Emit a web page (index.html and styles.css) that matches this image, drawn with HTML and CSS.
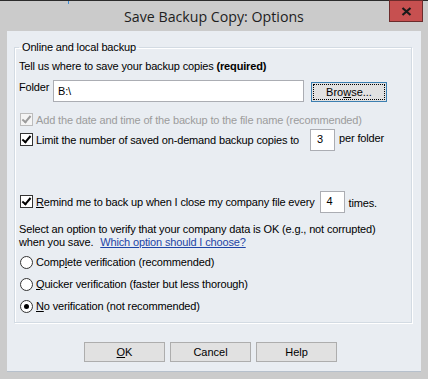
FILE: index.html
```html
<!DOCTYPE html>
<html>
  <head>
    <title>Save Backup Copy: Options</title>
    <link rel="stylesheet" href="styles.css">
  </head>
  <body>
    <div class="window">
      <div class="titlebar">
        <span class="titlebar__tick"></span>
        <h1 class="titlebar__title">Save Backup Copy: Options</h1>
        <button class="titlebar__close" type="button" aria-label="Close">
          <svg width="11" height="9" viewBox="0 0 11 9"><path d="M1.5 1 L9.5 8 M9.5 1 L1.5 8" stroke="#1a1a1a" stroke-width="2.2" fill="none"/></svg>
        </button>
      </div>

      <div class="panel">
        <fieldset class="group">
          <legend class="group__legend">Online and local backup</legend>

          <p class="intro">Tell us where to save your backup copies <b>(required)</b></p>

          <div class="folder-row">
            <span class="folder-row__label">Folder</span>
            <div class="field field--path">B:\</div>
            <button class="btn btn--browse" type="button"><span class="btn__focus">Bro<u>w</u>se...</span></button>
          </div>

          <div class="check check--disabled">
            <span class="check__box check__box--on"></span>
            <span>Add the date and time of the backup to the file name (recommended)</span>
          </div>

          <div class="check check--limit">
            <span class="check__box check__box--on"></span>
            <span class="check__text">Limit the number of saved on-demand backup copies to</span>
            <div class="field field--num">3</div>
            <span class="check__after">per folder</span>
          </div>

          <div class="check check--remind">
            <span class="check__box check__box--on"></span>
            <span class="check__text"><u>R</u>emind me to back up when I close my company file every</span>
            <div class="field field--num">4</div>
            <span class="check__after">times.</span>
          </div>

          <p class="verify">Select an option to verify that your company data is OK (e.g., not corrupted)<br>when you save. <a class="verify__link" href="#">Which option should I choose?</a></p>

          <div class="radio">
            <span class="radio__dot"></span>
            <span>Comp<u>l</u>ete verification (recommended)</span>
          </div>
          <div class="radio">
            <span class="radio__dot"></span>
            <span><u>Q</u>uicker verification (faster but less thorough)</span>
          </div>
          <div class="radio">
            <span class="radio__dot radio__dot--on"></span>
            <span><u>N</u>o verification (not recommended)</span>
          </div>
        </fieldset>

        <div class="actions">
          <button class="btn btn--action" type="button"><u>O</u>K</button>
          <button class="btn btn--action" type="button">Cancel</button>
          <button class="btn btn--action" type="button">Help</button>
        </div>
      </div>
    </div>
  </body>
</html>
```

FILE: styles.css
```css
body {
  margin: 0;
  background: #cbcbcb;
  font-family: "Liberation Sans", Arial, sans-serif;
  font-size: 11px;
  letter-spacing: -0.15px;
  color: #000;
  white-space: nowrap;
}

.window {
  width: 428px;
  height: 379px;
  border-top: 1px solid #2b2b2b;
  box-sizing: border-box;
}

/* title bar */
.titlebar {
  position: relative;
  height: 30px;
  display: flex;
  align-items: center;
  justify-content: center;
}
.titlebar__tick {
  position: absolute;
  left: 68px;
  top: 0;
  width: 1px;
  height: 3px;
  background: #3d8ed8;
}
.titlebar__title {
  margin: 0;
  padding-top: 1px;
  font-family: "Open Sans", sans-serif;
  font-size: 14.2px;
  letter-spacing: 0;
  font-weight: normal;
  color: #1e1e1e;
}
.titlebar__close {
  position: absolute;
  right: 5px;
  top: -1px;
  width: 34px;
  height: 22px;
  padding: 0;
  border: 1px solid #6b2b2b;
  background: #c75050;
  display: flex;
  align-items: center;
  justify-content: center;
}

/* client area */
.panel {
  margin: 0 7px;
  height: 341px;
  box-sizing: border-box;
  padding: 9px 9px 0 7px;
  background: #e9edf2;
  border-bottom: 1px solid #b6c0cc;
}

.group {
  margin: 0;
  padding: 4px 4px 0 4px;
  height: 283px;
  box-sizing: border-box;
  border: 1px solid #d3dbe3;
  box-shadow: inset 1px 1px 0 #fff, 1px 1px 0 #fff;
}
.group__legend {
  padding: 0 3px;
  line-height: 14px;
}

.intro {
  margin: 0;
  line-height: 16px;
}

.folder-row {
  display: flex;
  align-items: flex-start;
  margin-top: 6px;
  height: 22px;
}
.folder-row__label {
  width: 34px;
  line-height: 16px;
  margin-top: -1px;
}

.field {
  box-sizing: border-box;
  height: 22px;
  background: #fff;
  border: 1px solid #abadb3;
  padding: 3px 4px 0;
  line-height: 14px;
}
.field--path {
  width: 251px;
}
.field--num {
  width: 25px;
  margin-left: 11px;
  padding-left: 6px;
  padding-top: 2px;
}

.btn {
  font: inherit;
  color: #000;
  background: #e1e1e1;
  border: 1px solid #adadad;
  padding: 0;
  box-sizing: border-box;
}
.btn--browse {
  margin: 2px 0 0 7px;
  width: 76px;
  height: 20px;
  border-color: #3c7fb1;
  padding: 1px;
}
.btn__focus {
  display: block;
  height: 16px;
  line-height: 15px;
  border: 1px dotted #000;
  box-sizing: border-box;
}

/* checkboxes */
.check {
  display: flex;
  align-items: flex-start;
  line-height: 16px;
}
.check__box {
  width: 13px;
  height: 13px;
  box-sizing: border-box;
  margin: 1px 3px 0 1px;
  border: 1px solid #333;
  background: #fff;
  position: relative;
}
.check__box--on::after {
  content: "";
  position: absolute;
  left: 3px;
  top: 0;
  width: 3px;
  height: 7px;
  border: solid #000;
  border-width: 0 2px 2px 0;
  transform: rotate(40deg);
}
.check--disabled {
  margin-top: 10px;
  color: #9c9c9c;
}
.check--disabled .check__box {
  border-color: #bcbcbc;
  background: #f4f4f4;
}
.check--disabled .check__box--on::after {
  border-color: #9c9c9c;
}
.check--limit {
  margin-top: 1px;
  height: 22px;
}
.check--limit .check__box,
.check--remind .check__box {
  margin-top: 4px;
}
.check--limit .check__text,
.check--remind .check__text {
  padding-top: 3px;
}
.check__after {
  margin-left: 4px;
  padding-top: 1px;
}
.check--limit .field--num {
  margin-left: 11px;
}
.check--remind {
  margin-top: 40px;
  height: 22px;
}
.check--remind .field--num {
  margin-left: 5px;
}
.check--remind .check__after {
  padding-top: 4px;
}

.verify {
  margin: 10px 0 0;
  line-height: 13px;
}
.verify__link {
  color: #1e45a6;
  margin-left: 4px;
}

/* radios */
.radio {
  display: flex;
  align-items: center;
  height: 16px;
  margin-top: 6px;
}
.verify + .radio {
  margin-top: 5px;
}
.radio__dot {
  width: 13px;
  height: 13px;
  box-sizing: border-box;
  margin: 0 3px 0 1px;
  border: 1px solid #333;
  border-radius: 50%;
  background: #fff;
  display: flex;
  align-items: center;
  justify-content: center;
}
.radio__dot--on::after {
  content: "";
  width: 5px;
  height: 5px;
  border-radius: 50%;
  background: #000;
}

/* bottom buttons */
.actions {
  display: flex;
  justify-content: center;
  gap: 5px;
  padding-right: 5px;
  margin-top: 19px;
}
.btn--action {
  width: 81px;
  height: 20px;
  line-height: 17px;
}
```
